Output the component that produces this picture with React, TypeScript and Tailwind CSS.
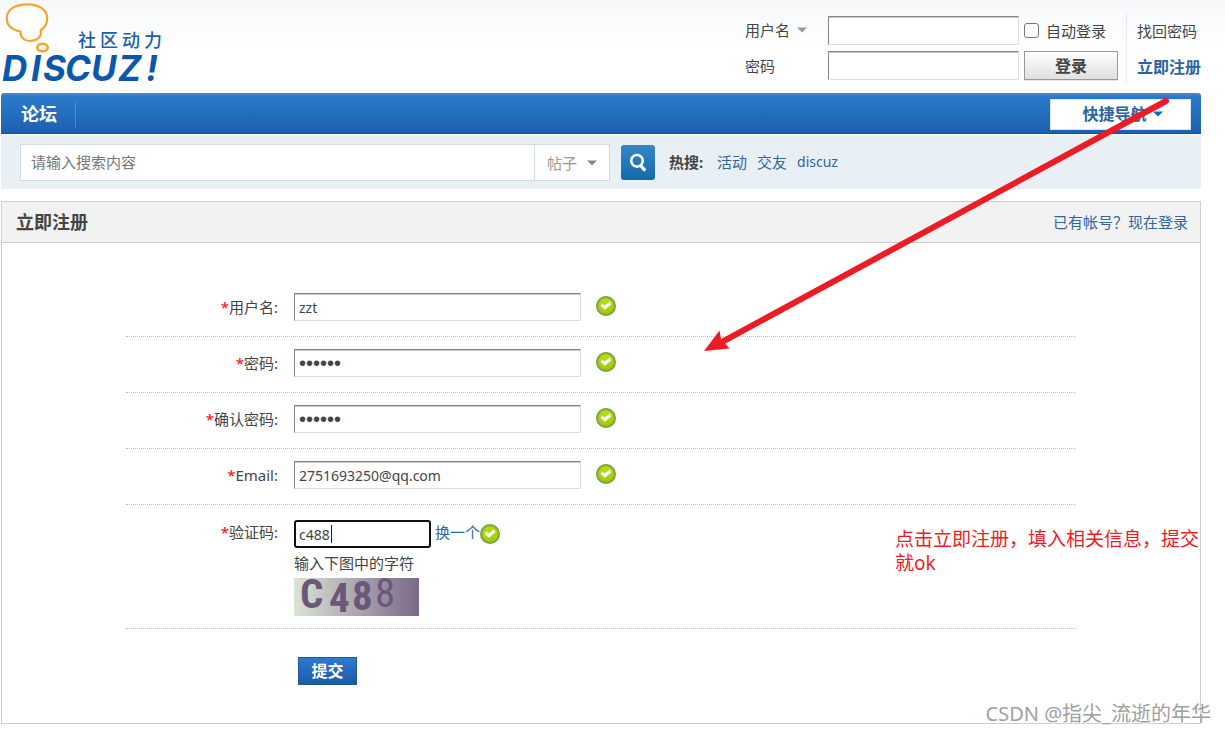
import { useId } from "react";

function Logo() {
  return (
    <svg width="164" height="88" viewBox="0 0 164 88" role="img" aria-label="Discuz! 社区动力">
      <path
        d="M19.5 31.5 C10 29.5 5.8 25 5.8 18.5 C5.8 10 14 4.3 26 4.3 C38 4.3 46.2 10 46.2 18.5 C46.2 24 43.5 28 39.5 30.5 C41.5 36.5 35.5 41 29 41 C23.5 41 19 37.5 19.5 31.5 Z"
        fill="#fff"
        stroke="#f5a52d"
        strokeWidth="2.2"
        strokeLinejoin="round"
      />
      <ellipse cx="41.5" cy="47.5" rx="5.2" ry="3.8" fill="#fff" stroke="#f5a52d" strokeWidth="2.6" />
      <text x="77" y="47" fill="#1a5fae" fontSize="18" fontWeight="500" className="font-['Noto_Sans_CJK_SC',sans-serif]">
        <tspan x="77">社</tspan>
        <tspan x="99">区</tspan>
        <tspan x="121">动</tspan>
        <tspan x="143">力</tspan>
      </text>
      <text y="81" fill="#0b57ab" fontSize="35" fontWeight="700" fontStyle="italic" className="font-[Inter,sans-serif]">
        <tspan x="1">D</tspan>
        <tspan x="30">I</tspan>
        <tspan x="42">S</tspan>
        <tspan x="64">C</tspan>
        <tspan x="90">U</tspan>
        <tspan x="117">Z</tspan>
        <tspan x="145">!</tspan>
      </text>
    </svg>
  );
}

function Caret({ className }: { className: string }) {
  return (
    <svg width="10" height="6" viewBox="0 0 10 6" className={`pointer-events-none ${className}`} aria-hidden="true">
      <path d="M0 0.5 H10 L5 5.5 Z" fill="currentColor" />
    </svg>
  );
}

function ValidIcon() {
  const id = useId();
  return (
    <svg width="20" height="20" viewBox="0 0 20 20" className="shrink-0" aria-hidden="true">
      <defs>
        <linearGradient id={id} x1="0" y1="0" x2="0" y2="1">
          <stop offset="0" stopColor="#bde010" />
          <stop offset="1" stopColor="#a2c90a" />
        </linearGradient>
      </defs>
      <circle cx="10" cy="10" r="9.2" fill={`url(#${id})`} stroke="#6f9b3c" strokeWidth="1.5" />
      <circle cx="10" cy="10" r="7.9" fill="none" stroke="#93bd26" strokeWidth="1.2" />
      <path d="M5.6 8.6 L8.9 11.7 L14.6 6.7" fill="none" stroke="#fff" strokeWidth="3.2" />
    </svg>
  );
}

function Captcha() {
  return (
    <svg width="125" height="38" viewBox="0 0 125 38" className="overflow-visible" role="img" aria-label="c488">
      <defs>
        <linearGradient id="captcha-bg">
          <stop offset="0" stopColor="#dae4d4" />
          <stop offset="1" stopColor="#7b6889" />
        </linearGradient>
      </defs>
      <rect width="125" height="38" fill="url(#captcha-bg)" />
      <g fill="#6c577b" fontSize="41" fontWeight="700" className="font-['Liberation_Sans_Narrow','Roboto_Condensed',Roboto,sans-serif]">
        <text x="6" y="30">C</text>
        <text x="35" y="34">4</text>
        <text x="58" y="32">8</text>
        <text x="81" y="29" fontWeight="400">8</text>
      </g>
    </svg>
  );
}

const inputStyle =
  "border border-t-[#848484] border-l-[#848484] border-r-[#e0e0e0] border-b-[#e0e0e0] bg-white shadow-[inset_0_1px_0_#ccc] outline-none";

function Header() {
  return (
    <header className="flex h-[93px] items-start justify-between bg-linear-to-b from-[#f6f8fa] to-white to-50% pl-px pr-6">
      <a href="#home" className="block">
        <Logo />
      </a>
      <form className="flex pt-[13px]">
        <div className="grid grid-cols-[78px_191px_94px] grid-rows-[29px_29px] items-center gap-x-[5px] gap-y-1.5 pt-[3px] pr-2">
          <div className="relative">
            <select aria-label="登录方式" className="w-[66px] appearance-none bg-transparent leading-5 outline-none">
              <option>用户名</option>
              <option>UID</option>
              <option>Email</option>
            </select>
            <Caret className="absolute left-[52px] top-2 text-[#999]" />
          </div>
          <input aria-label="用户名" className={`${inputStyle} h-[29px] w-full px-1`} />
          <label className="flex items-center gap-[7px] whitespace-nowrap leading-5">
            <input
              type="checkbox"
              className="size-[15px] appearance-none rounded-[3px] border border-[#767676] bg-white checked:bg-[#2366A8]"
            />
            自动登录
          </label>
          <label htmlFor="ls-password" className="leading-5">
            密码
          </label>
          <input id="ls-password" type="password" className={`${inputStyle} h-[29px] w-full px-1`} />
          <button
            type="button"
            className="h-[29px] border border-[#999] bg-linear-to-b from-white to-[#e0e0e0] text-base leading-5 font-bold shadow-[0_1px_0_#e5e5e5]"
          >
            登录
          </button>
        </div>
        <div className="flex h-[70px] flex-col justify-between border-l border-[#e5edf2] pt-2 pb-1.5 pl-2.5">
          <a href="#forgot" className="leading-5">
            找回密码
          </a>
          <a href="#register" className="text-base leading-5 font-bold text-[#2b65a0]">
            立即注册
          </a>
        </div>
      </form>
    </header>
  );
}

function Nav() {
  return (
    <nav className="flex h-[41px] items-center justify-between rounded-t-[3px] border-t-2 border-b border-t-[#3a88d6] border-b-[#154d91] bg-linear-to-b from-[#2b7acd] to-[#1f60ae] pr-2.5">
      <a href="#forum" className="flex h-[26px] items-center border-r border-[#4a8cd2] pr-[18px] pl-5 text-lg leading-6 font-bold text-white">
        论坛
      </a>
      <button
        type="button"
        className="flex h-[31px] w-[141px] items-center justify-center gap-1.5 border border-[#d8e6f4] bg-white pl-1 text-base leading-5 font-bold text-[#2b65a0]"
      >
        快捷导航
        <Caret className="text-[#0a6cb5]" />
      </button>
    </nav>
  );
}

function SearchBar() {
  return (
    <form className="mt-px flex h-[54px] items-start bg-[#e8eff5] pt-[9px] pl-[19px]">
      <div className="flex h-[37px] w-[590px] border border-[#cfdde3] bg-white">
        <input
          aria-label="搜索"
          placeholder="请输入搜索内容"
          className="min-w-0 flex-1 px-2.5 outline-none placeholder:text-[#757575]"
        />
        <div className="relative flex w-[75px] items-center border-l border-[#cfdde3]">
          <select
            aria-label="搜索类型"
            className="w-full appearance-none bg-transparent pl-3 leading-5 text-[#999] outline-none"
          >
            <option>帖子</option>
            <option>用户</option>
          </select>
          <Caret className="absolute right-3 text-[#888]" />
        </div>
      </div>
      <button
        type="submit"
        aria-label="搜索"
        className="mt-px ml-[11px] flex h-[35px] w-[34px] items-center justify-center rounded-[3px] bg-linear-to-b from-[#3586c8] to-[#0e6cab]"
      >
        <svg width="18" height="20" viewBox="0 0 18 20" aria-hidden="true">
          <circle cx="8" cy="7.8" r="5.8" fill="none" stroke="#fff" strokeWidth="2.6" />
          <path d="M11.4 12.2 L16.2 17.6" stroke="#fff" strokeWidth="3.2" />
        </svg>
      </button>
      <div className="flex gap-2.5 pt-2 pl-3.5 leading-5 text-[#369]">
        <strong className="w-[38px] text-[#444]">热搜:</strong>
        <a href="#activity">活动</a>
        <a href="#friends">交友</a>
        <a href="#discuz" className="text-sm leading-5">
          discuz
        </a>
      </div>
    </form>
  );
}

interface FieldProps {
  id: string;
  label: string;
  type?: string;
  value: string;
}

const fields: FieldProps[] = [
  { id: "username", label: "用户名", value: "zzt" },
  { id: "password", label: "密码", type: "password", value: "123456" },
  { id: "password2", label: "确认密码", type: "password", value: "123456" },
  { id: "email", label: "Email", value: "2751693250@qq.com" },
];

function FieldLabel({ id, label }: { id: string; label: string }) {
  return (
    <label htmlFor={id} className="w-[152px] shrink-0 pt-1 text-right leading-5">
      <span className="text-[#f00]">*</span>
      {label}:
    </label>
  );
}

function Field({ id, label, type = "text", value }: FieldProps) {
  const textStyle = type === "password" ? "font-['Liberation_Sans',sans-serif] text-xl" : "text-sm";
  return (
    <div className="flex h-14 items-start border-b border-dotted border-[#bbb] pt-3">
      <FieldLabel id={id} label={label} />
      <input
        id={id}
        type={type}
        defaultValue={value}
        className={`${inputStyle} ${textStyle} ml-4 h-7 w-[287px] px-1`}
      />
      <div className="ml-[15px] pt-[3px]">
        <ValidIcon />
      </div>
    </div>
  );
}

function RegisterPanel() {
  return (
    <section className="mt-3 border border-[#cdcdcd] bg-white">
      <div className="flex h-[41px] items-center justify-between border-b border-[#cdcdcd] bg-[#f2f2f2] pr-3 pl-3.5">
        <h1 className="text-lg leading-6 font-bold">立即注册</h1>
        <a href="#login" className="leading-5 text-[#369]">
          已有帐号？现在登录
        </a>
      </div>
      <form className="mx-[124px] pt-[38px] pb-[38px]">
        {fields.map((field) => (
          <Field key={field.id} {...field} />
        ))}
        <div className="flex h-[124px] items-start border-b border-dotted border-[#bbb] pt-[13px]">
          <FieldLabel id="seccode" label="验证码" />
          <div className="ml-4 pt-0.5">
            <div className="flex items-center">
              <div className="relative">
                <input
                  id="seccode"
                  defaultValue="c488"
                  className="block h-7 w-[137px] rounded-[3px] border-2 border-[#101010] bg-white px-[3px] text-sm outline-none"
                />
                <span className="absolute top-[5px] left-[37px] h-[18px] w-px bg-[#222]" />
              </div>
              <a href="#refresh" className="ml-1 pb-1 leading-5 text-[#369]">
                换一个
              </a>
              <ValidIcon />
            </div>
            <p className="mt-1 mb-1 leading-[22px]">输入下图中的字符</p>
            <Captcha />
          </div>
        </div>
        <button
          type="submit"
          className="mt-7 ml-[172px] block h-7 w-[59px] border border-[#235994] bg-linear-to-b from-[#2d7ad0] to-[#2059a8] text-base leading-5 font-bold text-white"
        >
          提交
        </button>
      </form>
    </section>
  );
}

function Annotations() {
  return (
    <>
      <svg
        width="480"
        height="262"
        viewBox="0 0 480 262"
        className="pointer-events-none absolute top-24 left-[700px]"
        aria-hidden="true"
      >
        <path d="M466 5 L22 246" stroke="#ed1c24" strokeWidth="6" strokeLinecap="round" />
        <path d="M4 255 L19.5 234.5 L21 243 L29.5 252.5 Z" fill="#ed1c24" />
      </svg>
      <p className="pointer-events-none absolute top-[527px] left-[895px] w-[306px] text-[19px] leading-6 text-[#ed1c24]">
        点击立即注册，填入相关信息，提交就ok
      </p>
      <p className="pointer-events-none absolute top-[702px] right-3.5 text-xl leading-6 whitespace-nowrap text-[#a0a0a0] [text-shadow:1px_1px_0_#fff]">
        CSDN @指尖_流逝的年华
      </p>
    </>
  );
}

export default function App() {
  return (
    <div className="relative min-h-screen bg-white font-['Noto_Sans','Noto_Sans_CJK_SC',sans-serif] text-[15px] text-[#444]">
      <Header />
      <main className="pr-6 pl-px">
        <Nav />
        <SearchBar />
        <RegisterPanel />
      </main>
      <Annotations />
    </div>
  );
}
